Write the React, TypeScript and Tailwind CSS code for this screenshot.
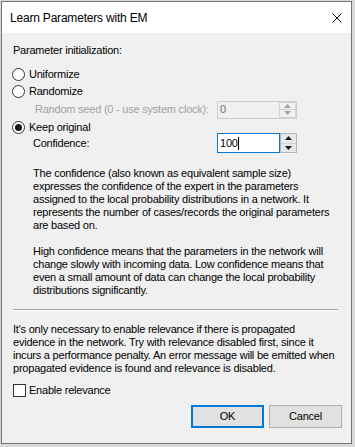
import React from 'react';

// Small radio button in Windows 10 style
function Radio({ checked }: { checked?: boolean }) {
  return (
    <span className="w-[13px] h-[13px] rounded-full border border-[#333333] bg-white flex items-center justify-center shrink-0">
      {checked && <span className="w-[7px] h-[7px] rounded-full bg-[#1a1a1a]" />}
    </span>
  );
}

// Up / down buttons of a numeric field
function Spinner({ disabled }: { disabled?: boolean }) {
  const arrow = disabled ? '#a3a3a3' : '#1a1a1a';
  return (
    <div
      className={`w-[17px] h-full flex flex-col border ${
        disabled ? 'border-[#d4d4d4] bg-[#f0f0f0]' : 'border-[#b5b5b5] bg-[#e8e8e8]'
      }`}
    >
      <div className="flex-1 flex items-center justify-center border-b border-[#d4d4d4]">
        <svg width="7" height="4" viewBox="0 0 7 4">
          <path d="M3.5 0 L7 4 L0 4 Z" fill={arrow} />
        </svg>
      </div>
      <div className="flex-1 flex items-center justify-center">
        <svg width="7" height="4" viewBox="0 0 7 4">
          <path d="M0 0 L7 0 L3.5 4 Z" fill={arrow} />
        </svg>
      </div>
    </div>
  );
}

const para1 = [
  'The confidence (also known as equivalent sample size)',
  'expresses the confidence of the expert in the parameters',
  'assigned to the local probability distributions in a network. It',
  'represents the number of cases/records the original parameters',
  'are based on.',
];

const para2 = [
  'High confidence means that the parameters in the network will',
  'change slowly with incoming data. Low confidence means that',
  'even a small amount of data can change the local probability',
  'distributions significantly.',
];

const para3 = [
  "It's only necessary to enable relevance if there is propagated",
  'evidence in the network. Try with relevance disabled first, since it',
  'incurs a performance penalty. An error message will be emitted when',
  'propagated evidence is found and relevance is disabled.',
];

export default function App() {
  return (
    <div className="w-[355px] h-[447px] bg-[#d9d9d9] pt-px pl-px font-['Liberation_Sans',Arial,sans-serif] text-black">
      <div className="w-[351px] h-[443px] border border-[#737373] bg-[#f0f0f0] flex flex-col">
        {/* Title bar */}
        <div className="h-[31px] bg-white flex items-center justify-between pl-[8px] pr-[9px] shrink-0">
          <span className="text-[12px] tracking-[-0.2px] pt-[1px]">Learn Parameters with EM</span>
          <svg width="10" height="10" viewBox="0 0 10 10">
            <path d="M0.5 0.5 L9.5 9.5 M9.5 0.5 L0.5 9.5" stroke="#111" strokeWidth="1" />
          </svg>
        </div>

        {/* Body */}
        <div className="flex flex-col text-[11px] leading-[13px] tracking-[-0.22px] pl-[10px] pr-[8px]">
          <div className="mt-[11px] pl-px">Parameter initialization:</div>

          <div className="mt-[9px] h-[17px] flex items-center gap-[4px]">
            <Radio />
            <span>Uniformize</span>
          </div>
          <div className="h-[17px] flex items-center gap-[4px]">
            <Radio />
            <span>Randomize</span>
          </div>

          <div className="h-[19px] flex items-center">
            <span className="pl-[23px] w-[205px] text-[#a0a0a0]">Random seed (0 - use system clock):</span>
            <div className="w-[80px] h-[18px] flex border border-[#cccccc] bg-[#f0f0f0]">
              <span className="flex-1 pl-[2px] flex items-center text-[#6d6d6d]">0</span>
              <Spinner disabled />
            </div>
          </div>

          <div className="h-[16px] flex items-center gap-[4px]">
            <Radio checked />
            <span>Keep original</span>
          </div>

          <div className="mt-[-2px] h-[20px] flex items-center">
            <span className="pl-[21px] w-[205px]">Confidence:</span>
            <div className="w-[80px] h-[20px] flex">
              <span className="flex-1 pl-[2px] flex items-center bg-white border border-[#0078d7]">
                100<span className="w-px h-[13px] bg-black" />
              </span>
              <Spinner />
            </div>
          </div>

          <div className="mt-[14px] pl-[21px] whitespace-nowrap">
            {para1.map((l) => (
              <div key={l}>{l}</div>
            ))}
            <div className="h-[13px]" />
            {para2.map((l) => (
              <div key={l}>{l}</div>
            ))}
          </div>

          <div className="mt-[12px] ml-px mr-[5px] h-[2px] border-t border-[#a0a0a0] border-b border-b-white" />

          <div className="mt-[12px] pl-px whitespace-nowrap">
            {para3.map((l) => (
              <div key={l}>{l}</div>
            ))}
          </div>

          <div className="mt-[8px] h-[15px] flex items-center gap-[3px] pl-px">
            <span className="w-[13px] h-[13px] border border-[#333333] bg-white" />
            <span>Enable relevance</span>
          </div>

          <div className="mt-[7px] flex justify-end gap-[5px] pr-px">
            <button className="w-[73px] h-[23px] border-2 border-[#0078d7] bg-[#e1e1e1]">OK</button>
            <button className="w-[73px] h-[23px] border border-[#adadad] bg-[#e1e1e1]">Cancel</button>
          </div>
        </div>
      </div>
    </div>
  );
}
